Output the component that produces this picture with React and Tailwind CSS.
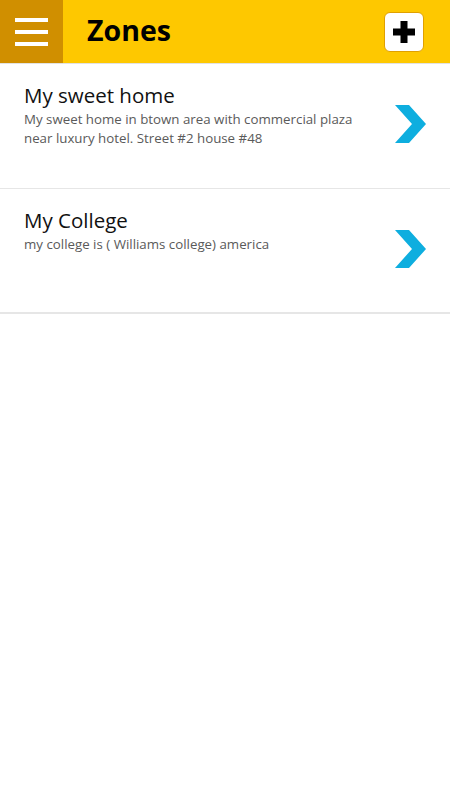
import React from "react";

const zones = [
  {
    title: "My sweet home",
    desc: "My sweet home in btown area with commercial plaza near luxury hotel. Street #2 house #48",
  },
  {
    title: "My College",
    desc: "my college is ( Williams college) america",
  },
];

function Chevron() {
  return (
    <svg width="32" height="39" viewBox="0 0 32 39" className="shrink-0">
      <polygon points="1,0 15,0 32,19 15,38 1,38 18,19" fill="#0eaedf" />
    </svg>
  );
}

export default function App() {
  return (
    <div className="w-[450px] h-[800px] bg-white" style={{ fontFamily: '"Open Sans", "Noto Sans", sans-serif' }}>
      <header className="h-[64px] flex items-stretch bg-[#fec800] border-b border-[#e2e2e2]">
        <div className="w-[63px] bg-[#d08f00] flex flex-col items-center justify-center gap-[8px]">
          <div className="w-[33px] h-[4px] bg-white" />
          <div className="w-[33px] h-[4px] bg-white" />
          <div className="w-[33px] h-[4px] bg-white" />
        </div>
        <h1 className="ml-[24px] flex-1 flex items-center text-[28.5px] font-bold text-black leading-none pb-[2px]">Zones</h1>
        <div className="flex items-center pr-[26px]">
          <button className="w-[40px] h-[40px] bg-white rounded-[6px] border border-[#e0a000] flex items-center justify-center">
            <svg width="22" height="22" viewBox="0 0 22 22">
              <path d="M7.5 0h7v7.5H22v7h-7.5V22h-7v-7.5H0v-7h7.5z" fill="#000" />
            </svg>
          </button>
        </div>
      </header>
      {zones.map((z, i) => (
        <div
          key={i}
          className={`h-[125px] flex items-start pl-[24px] pr-[24px] ${i === zones.length - 1 ? "border-b-2" : "border-b"} border-[#e6e6e6]`}
        >
          <div className="flex-1 pt-[17px] pr-[30px]">
            <div className="text-[20.5px] leading-[28px] text-[#111]">{z.title}</div>
            <div className="text-[13.3px] leading-[19px] text-[#5a5a5a] mt-[1px]">{z.desc}</div>
          </div>
          <div className="pt-[41px]">
            <Chevron />
          </div>
        </div>
      ))}
    </div>
  );
}
